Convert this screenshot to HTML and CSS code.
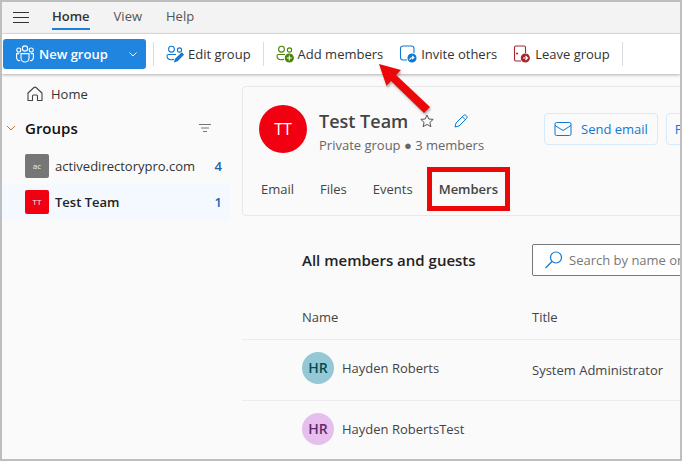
FILE: index.html
```html
<!DOCTYPE html>
<html lang="en">
<head>
    <meta charset="UTF-8">
    <meta name="viewport" content="width=device-width, initial-scale=1.0">
    <title>Test Team - Groups</title>
    <link rel="stylesheet" href="styles.css">
</head>
<body>
    <!-- Menu tabs -->
    <header class="menu-bar">
        <button class="icon-button" aria-label="Navigation">
            <svg width="16" height="12" viewBox="0 0 16 12" stroke="#333" fill="none"><path d="M0 .5h16M0 5.500h16M0 10.500h16"/></svg>
        </button>
        <nav class="menu-tabs">
            <a href="#" class="menu-tab active">Home</a>
            <a href="#" class="menu-tab">View</a>
            <a href="#" class="menu-tab">Help</a>
        </nav>
    </header>

    <!-- Ribbon -->
    <div class="ribbon">
        <div class="new-group">
            <button class="new-group-main">
                <svg width="20" height="18" viewBox="0 0 20 18" stroke="#fff" stroke-width="1.1" fill="none"><circle cx="10" cy="3.5" r="2.6"/><circle cx="3.8" cy="5" r="2"/><circle cx="16.2" cy="5" r="2"/><path d="M6 8.6h8v4.4a4 4 0 0 1-8 0zM4.2 8.6H1.6v3.6c0 2.2 1.4 3.6 3.6 3.6M15.8 8.6h2.6v3.6c0 2.2-1.4 3.6-3.6 3.6"/></svg>
                New group
            </button>
            <button class="new-group-more" aria-label="More new options">
                <svg width="8" height="5" viewBox="0 0 8 5" stroke="#fff" fill="none"><path d="M.5 .5L4 4l3.500-3.500"/></svg>
            </button>
        </div>
        <span class="divider"></span>
        <button class="ribbon-button">
            <svg width="18" height="18" viewBox="0 0 18 18" stroke="#0f78d4" stroke-width="1.1" fill="none"><circle cx="5.5" cy="4.2" r="2.9"/><circle cx="13.5" cy="5" r="2.1"/><path d="M10 9.5H2.4c-.8 0-1.4.6-1.4 1.3 0 2.4 1.8 4 4.5 4 1 0 1.8-.1 2.5-.5"/><path d="M15.8 8.2l1.4 1.4-6 6-2.3.8.8-2.3z" fill="#0f78d4" stroke-width="1.4"/></svg>
            Edit group
        </button>
        <span class="divider"></span>
        <button class="ribbon-button add-members">
            <svg width="18" height="18" viewBox="0 0 18 18" stroke="#498205" stroke-width="1.1" fill="none"><circle cx="5.5" cy="4.2" r="2.9"/><circle cx="13.5" cy="5" r="2.1"/><path d="M9 9.5H2.4c-.8 0-1.4.6-1.4 1.3 0 2.4 1.8 4 4.5 4 1 0 1.8-.1 2.5-.5"/><circle cx="13.3" cy="13" r="4" fill="#498205"/><path d="M13.3 10.5v5M10.8 13h5" stroke="#fff"/></svg>
            Add members
            <svg class="arrow" width="62" height="56" viewBox="0 0 62 56" fill="#ec0808"><path d="M1 2l22 6-5 5 34 32-6 6-33-32-4.500 5z"/></svg>
        </button>
        <button class="ribbon-button">
            <svg width="18" height="18" viewBox="0 0 18 18" stroke="#0f78d4" stroke-width="1.1" fill="none"><path d="M8 15H4a2.500 2.500 0 0 1-2.500-2.500v-9A2.500 2.500 0 0 1 4 1h8.500A2.500 2.500 0 0 1 15 3.500V8"/><circle cx="13" cy="13" r="4" fill="#0f78d4"/><path d="M10.800 15c0-1.800 1-2.500 3.900-2.500M13.200 10.800l1.700 1.700-1.700 1.700" stroke="#fff"/></svg>
            Invite others
        </button>
        <button class="ribbon-button">
            <svg width="18" height="18" viewBox="0 0 18 18" stroke="#a4262c" stroke-width="1.1" fill="none"><path d="M8 16H3a1.500 1.500 0 0 1-1.500-1.500v-12A1.500 1.500 0 0 1 3 1h8a1.500 1.500 0 0 1 1.500 1.500V8"/><circle cx="4" cy="8.500" r=".5"/><circle cx="12.300" cy="13" r="4" fill="#a4262c"/><path d="M10 13h4.200M12.500 11l2 2-2 2" stroke="#fff"/></svg>
            Leave group
        </button>
        <span class="divider"></span>
    </div>

    <div class="content">
        <!-- Folder pane -->
        <aside class="sidebar">
            <a href="#" class="home-link">
                <svg width="16" height="16" viewBox="0 0 16 16" stroke="#444" stroke-width="1.1" fill="none"><path d="M1 7l6-5.500a1.500 1.500 0 0 1 2 0L15 7v7.500h-4.500V10a1 1 0 0 0-1-1h-3a1 1 0 0 0-1 1v4.500H1z" stroke-linejoin="round"/></svg>
                Home
            </a>
            <div class="groups-header">
                <svg width="10" height="6" viewBox="0 0 10 6" stroke="#c4713b" fill="none"><path d="M1 1l4 4 4-4"/></svg>
                <h2>Groups</h2>
                <button class="icon-button" aria-label="Filter groups">
                    <svg width="12" height="8" viewBox="0 0 12 8" stroke="#777" fill="none"><path d="M0 .5h12M2 4h8M4 7.500h4"/></svg>
                </button>
            </div>
            <a href="#" class="group-item">
                <span class="tile">ac</span>
                <span class="group-name">activedirectorypro.com</span>
                <span class="count">4</span>
            </a>
            <a href="#" class="group-item selected">
                <span class="tile red">TT</span>
                <span class="group-name">Test Team</span>
                <span class="count">1</span>
            </a>
        </aside>

        <!-- Group page -->
        <main class="main">
            <section class="group-card">
                <div class="group-top">
                    <span class="group-logo">TT</span>
                    <div class="group-info">
                        <div class="title-row">
                            <h1>Test Team</h1>
                            <button class="icon-button" aria-label="Favorite">
                                <svg width="14" height="14" viewBox="0 0 14 14" stroke="#555" fill="none" stroke-linejoin="round"><path d="M7 1l1.800 4 4.400.4-3.300 3 1 4.300L7 10.400l-3.900 2.300 1-4.300-3.300-3L5.200 5z"/></svg>
                            </button>
                            <button class="icon-button edit" aria-label="Edit">
                                <svg width="14" height="14" viewBox="0 0 14 14" stroke="#0f78d4" fill="none" stroke-linejoin="round"><path d="M1 13l1-4 7.500-7.500c1.800-1.800 4.800 1.200 3 3L5 12zM8.300 2.700l3 3"/></svg>
                            </button>
                        </div>
                        <p>Private group ● 3 members</p>
                    </div>
                    <div class="actions">
                        <button class="action">
                            <svg width="18" height="14" viewBox="0 0 18 14" stroke="#0f78d4" fill="none"><rect x="1" y=".5" width="16" height="13" rx="1.500"/><path d="M1 3.500l8 5 8-5"/></svg>
                            Send email
                        </button>
                        <button class="action follow">Follow</button>
                    </div>
                </div>
                <nav class="tabs">
                    <a href="#">Email</a>
                    <a href="#">Files</a>
                    <a href="#">Events</a>
                    <a href="#" class="current">Members</a>
                </nav>
            </section>

            <div class="members-header">
                <h2>All members and guests</h2>
                <label class="search">
                    <svg width="18" height="18" viewBox="0 0 18 18" stroke="#0f78d4" stroke-width="1.200" fill="none"><circle cx="11" cy="6.500" r="5.500"/><path d="M7 10.500l-6.500 6.500"/></svg>
                    <input type="search" placeholder="Search by name or email" aria-label="Search members">
                </label>
            </div>

            <table class="members">
                <thead>
                    <tr><th>Name</th><th>Title</th></tr>
                </thead>
                <tbody>
                    <tr>
                        <td><div class="person"><span class="avatar teal">HR</span>Hayden Roberts</div></td>
                        <td>System Administrator</td>
                    </tr>
                    <tr>
                        <td><div class="person"><span class="avatar pink">HR</span>Hayden RobertsTest</div></td>
                        <td></td>
                    </tr>
                </tbody>
            </table>
        </main>
    </div>
</body>
</html>
```
FILE: styles.css
```css
/* General Styles */
* {
    box-sizing: border-box;
}

body {
    margin: 0;
    height: 100vh;
    border: 2px solid #bebebe;
    background-color: #fafafa;
    color: #333;
    font-family: "Open Sans", "Noto Sans", sans-serif;
    font-size: 13px;
    line-height: 20px;
    display: flex;
    flex-direction: column;
    overflow: hidden;
}

h1, h2, p {
    margin: 0;
}

a {
    color: inherit;
    text-decoration: none;
}

button {
    padding: 0;
    border: none;
    background: none;
    color: inherit;
    font: inherit;
    white-space: nowrap;
    cursor: pointer;
}

svg {
    flex: none;
}

.icon-button {
    display: flex;
}

/* Menu tabs */
.menu-bar {
    display: flex;
    align-items: center;
    gap: 23px;
    height: 32px;
    flex: none;
    padding: 0 11px;
    background-color: #f3f3f3;
    border-bottom: 1px solid #e3e3e3;
}

.menu-tabs {
    display: flex;
    gap: 24px;
}

.menu-tab {
    height: 24px;
    color: #555;
}

.menu-tab.active {
    color: #333;
    font-weight: 600;
    border-bottom: 2px solid #1b80d8;
}

/* Ribbon */
.ribbon {
    display: flex;
    align-items: center;
    height: 40px;
    flex: none;
    padding-left: 1px;
    background-color: white;
    box-shadow: 0 1px 3px rgba(0, 0, 0, 0.3);
    z-index: 1;
}

.new-group {
    display: flex;
    width: 143px;
    height: 30px;
    border-radius: 3px;
    background-color: #2085de;
    color: white;
    font-weight: 600;
}

.new-group-main {
    flex: 1;
    display: flex;
    align-items: center;
    gap: 4px;
    padding-left: 12px;
}

.new-group-more {
    display: flex;
    align-items: center;
    justify-content: center;
    width: 26px;
}

.divider {
    width: 1px;
    height: 24px;
    margin: 0 7px;
    background-color: #dcdcdc;
}

.ribbon-button {
    display: flex;
    align-items: center;
    gap: 4px;
    padding: 0 5px;
}

.ribbon-button + .ribbon-button {
    margin-left: 6px;
}

.add-members {
    position: relative;
}

.arrow {
    position: absolute;
    left: 107px;
    top: 18px;
    filter: drop-shadow(1px 2px 1px rgba(0, 0, 0, 0.3));
}

.content {
    display: flex;
    flex: 1;
    min-height: 0;
}

/* Folder pane */
.sidebar {
    flex: none;
    width: 228px;
    padding-top: 10px;
}

.home-link {
    display: flex;
    align-items: center;
    gap: 8px;
    padding-left: 25px;
}

.groups-header {
    display: flex;
    align-items: center;
    gap: 9px;
    height: 24px;
    margin: 12px 19px 8px 4px;
    color: #111;
}

.groups-header h2 {
    flex: 1;
    font-size: 15px;
    font-weight: 600;
}

.group-item {
    display: flex;
    align-items: center;
    gap: 6px;
    height: 36px;
    padding: 0 8px 0 23px;
}

.group-name {
    flex: 1;
}

.group-item.selected {
    background-color: #f3f9fe;
    border-radius: 3px;
}

.selected .group-name {
    color: #222;
    font-weight: 600;
}

.tile {
    width: 24px;
    height: 24px;
    border-radius: 2px;
    background-color: #767676;
    color: #eee;
    font-size: 8px;
    line-height: 24px;
    text-align: center;
}

.tile.red {
    background-color: #f00010;
}

.count {
    color: #1b62ad;
    font-weight: 600;
}

/* Group page */
.main {
    flex: 1;
    min-width: 0;
    padding: 12px 0 0 12px;
    overflow: hidden;
}

.group-card {
    min-width: 520px;
    padding: 18px 16px 0;
    border: 1px solid #e8e8e8;
    border-radius: 4px;
}

.group-top {
    display: flex;
    gap: 12px;
}

.group-logo {
    flex: none;
    width: 48px;
    height: 48px;
    border-radius: 50%;
    background-color: #f00010;
    color: white;
    font-size: 16px;
    line-height: 48px;
    text-align: center;
}

.group-info {
    flex: none;
    width: 213px;
    color: #666;
}

.title-row {
    display: flex;
    align-items: center;
    gap: 12px;
    height: 30px;
    padding-top: 2px;
}

h1 {
    color: #444;
    font-size: 18px;
    font-weight: 600;
}

.edit {
    margin-left: 8px;
}

.actions {
    display: flex;
    gap: 8px;
    padding-top: 8px;
}

.action {
    display: flex;
    align-items: center;
    gap: 9px;
    height: 32px;
    padding: 0 9px;
    border: 1px solid #d6eafa;
    border-radius: 4px;
    color: #0f78d4;
}

.follow {
    padding: 0 8px;
}

.tabs {
    display: flex;
    align-items: center;
    height: 44px;
    margin: 12px 0 4px;
    color: #444;
}

.tabs a {
    margin-left: 2px;
    margin-right: 24px;
}

.tabs .current {
    margin: 0 0 0 -10px;
    padding: 7px;
    border: 5px solid #ec0808;
    font-weight: 600;
}

/* Members */
.members-header {
    display: flex;
    align-items: center;
    min-width: 520px;
    margin-top: 28px;
    padding-left: 60px;
}

.members-header h2 {
    width: 230px;
    color: #222;
    font-size: 15px;
    font-weight: 600;
}

.search {
    display: flex;
    align-items: center;
    gap: 6px;
    flex: 1;
    height: 32px;
    padding-left: 12px;
    border: 1px solid #777;
    border-radius: 2px;
    background-color: white;
}

.search input {
    flex: 1;
    padding: 0;
    border: none;
    outline: none;
    background: none;
    font: inherit;
}

.search input::placeholder {
    color: #777;
}

.members {
    width: 100%;
    min-width: 520px;
    margin-top: 19px;
    border-collapse: collapse;
    color: #444;
}

.members th,
.members td {
    padding: 0;
    border-bottom: 1px solid #ececec;
    text-align: left;
    font-weight: 400;
}

.members th {
    height: 44px;
}

.members td {
    height: 61px;
}

.members th:first-child,
.members td:first-child {
    width: 290px;
    padding-left: 60px;
}

.person {
    display: flex;
    align-items: center;
    gap: 8px;
    padding-bottom: 4px;
}

.avatar {
    width: 32px;
    height: 32px;
    border-radius: 50%;
    font-size: 14px;
    font-weight: 600;
    line-height: 32px;
    text-align: center;
}

.teal {
    background-color: #94c8d4;
    color: #004b55;
}

.pink {
    background-color: #e6bfed;
    color: #63276d;
}
```
